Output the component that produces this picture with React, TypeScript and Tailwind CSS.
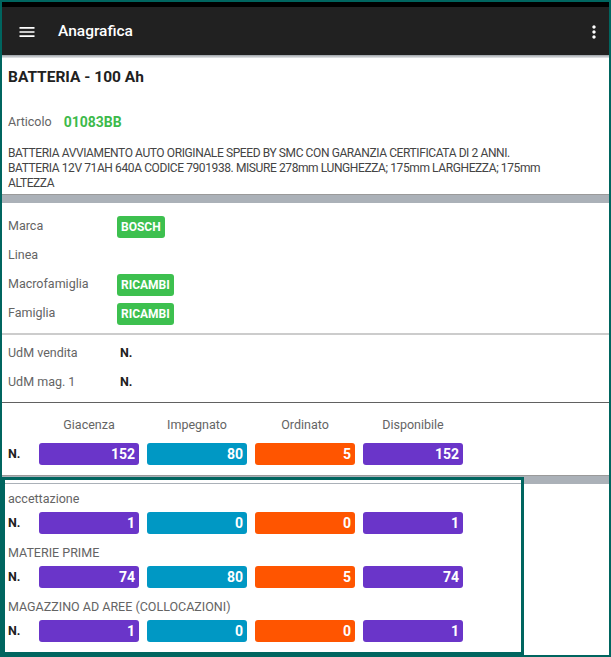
import React from 'react';

type Qty = { giacenza: number; impegnato: number; ordinato: number; disponibile: number };

const totals: Qty = { giacenza: 152, impegnato: 80, ordinato: 5, disponibile: 152 };

const magazzini: { nome: string; qty: Qty }[] = [
  { nome: 'accettazione', qty: { giacenza: 1, impegnato: 0, ordinato: 0, disponibile: 1 } },
  { nome: 'MATERIE PRIME', qty: { giacenza: 74, impegnato: 80, ordinato: 5, disponibile: 74 } },
  { nome: 'MAGAZZINO AD AREE (COLLOCAZIONI)', qty: { giacenza: 1, impegnato: 0, ordinato: 0, disponibile: 1 } },
];

const Chip: React.FC<{ text: string }> = ({ text }) => (
  <span className="inline-flex h-[22px] items-center rounded-[3px] bg-[#3dc04f] px-[4px] text-[12px] font-bold text-white">
    {text}
  </span>
);

const InfoRow: React.FC<{ label: string; labelWidth?: string; children?: React.ReactNode }> = ({ label, labelWidth = 'w-[109px]', children }) => (
  <div className="flex h-[29px] items-center">
    <span className={`${labelWidth} text-[12.5px] text-[#646464]`}>{label}</span>
    {children}
  </div>
);

const QtyBars: React.FC<{ qty: Qty }> = ({ qty }) => (
  <div className="flex h-[22px] items-center">
    <span className="w-[31px] text-[12.5px] font-bold text-[#212121]">N.</span>
    <div className="flex gap-[8px]">
      <div className="flex h-[22px] w-[100px] items-center justify-end rounded-[3px] bg-[#6a35c9] pr-[4px] text-[14px] font-bold text-white">{qty.giacenza}</div>
      <div className="flex h-[22px] w-[100px] items-center justify-end rounded-[3px] bg-[#0098c4] pr-[4px] text-[14px] font-bold text-white">{qty.impegnato}</div>
      <div className="flex h-[22px] w-[100px] items-center justify-end rounded-[3px] bg-[#ff5500] pr-[4px] text-[14px] font-bold text-white">{qty.ordinato}</div>
      <div className="flex h-[22px] w-[100px] items-center justify-end rounded-[3px] bg-[#6a35c9] pr-[4px] text-[14px] font-bold text-white">{qty.disponibile}</div>
    </div>
  </div>
);

const Band: React.FC = () => (
  <div className="h-[9px] border-t border-[#9a9a9a] bg-[#abb1b8]" />
);

const App: React.FC = () => {
  return (
    <div className="flex h-[657px] w-[611px] flex-col overflow-hidden border-2 border-[#00655f] bg-white font-['Roboto',sans-serif]">
      {/* status bar + toolbar */}
      <div className="h-[5px] bg-black" />
      <div className="flex h-[48px] items-center bg-[#212121] pl-[15px] pr-[5px] text-white">
        <svg viewBox="0 0 24 24" className="mt-[1px] h-5 w-5" fill="currentColor">
          <path d="M3 18h18v-2H3v2zm0-5h18v-2H3v2zm0-7v2h18V6H3z" />
        </svg>
        <span className="ml-[21px] pt-[1px] text-[15.5px] font-medium">Anagrafica</span>
        <svg viewBox="0 0 24 24" className="ml-auto mt-[1px] h-5 w-5" fill="currentColor">
          <path d="M12 8c1.1 0 2-.9 2-2s-.9-2-2-2-2 .9-2 2 .9 2 2 2zm0 2c-1.1 0-2 .9-2 2s.9 2 2 2 2-.9 2-2-.9-2-2-2zm0 6c-1.1 0-2 .9-2 2s.9 2 2 2 2-.9 2-2-.9-2-2-2z" />
        </svg>
      </div>
      <div className="h-[3px] bg-gradient-to-b from-[#9aa0a6] to-[#e8eaec]" />

      {/* articolo */}
      <div className="px-[6px] pt-[9px] pb-[3px]">
        <div className="text-[15.5px] font-bold leading-[20px] text-[#212121]">BATTERIA - 100 Ah</div>
        <div className="mt-[25px] flex h-[20px] items-center">
          <span className="text-[12.5px] text-[#646464]">Articolo</span>
          <span className="ml-[12px] text-[14px] font-bold text-[#3dba4b]">01083BB</span>
        </div>
        <p className="mt-[14px] max-w-[548px] text-[12px] leading-[15px] tracking-[-0.4px] text-[#444]">
          BATTERIA AVVIAMENTO AUTO ORIGINALE SPEED BY SMC CON GARANZIA CERTIFICATA DI 2 ANNI. BATTERIA 12V 71AH 640A CODICE 7901938. MISURE 278mm LUNGHEZZA; 175mm LARGHEZZA; 175mm ALTEZZA
        </p>
      </div>
      <Band />

      {/* classificazione */}
      <div className="border-b-2 border-[#cccccc] px-[6px] pt-[9px] pb-[5px]">
        <InfoRow label="Marca"><Chip text="BOSCH" /></InfoRow>
        <InfoRow label="Linea" />
        <InfoRow label="Macrofamiglia"><Chip text="RICAMBI" /></InfoRow>
        <InfoRow label="Famiglia"><Chip text="RICAMBI" /></InfoRow>
      </div>

      {/* unità di misura */}
      <div className="border-b border-[#616161] px-[6px] pt-[4px] pb-[5px]">
        <InfoRow label="UdM vendita" labelWidth="w-[112px]"><span className="text-[12.5px] font-bold text-[#212121]">N.</span></InfoRow>
        <InfoRow label="UdM mag. 1" labelWidth="w-[112px]"><span className="text-[12.5px] font-bold text-[#212121]">N.</span></InfoRow>
      </div>

      {/* totali */}
      <div className="px-[6px] pt-[13px] pb-[10px]">
        <div className="ml-[31px] flex gap-[8px] text-[12.5px] leading-[18px] text-[#646464]">
          <span className="w-[100px] text-center">Giacenza</span>
          <span className="w-[100px] text-center">Impegnato</span>
          <span className="w-[100px] text-center">Ordinato</span>
          <span className="w-[100px] text-center">Disponibile</span>
        </div>
        <div className="mt-[9px]">
          <QtyBars qty={totals} />
        </div>
      </div>
      <Band />

      {/* dettaglio per magazzino */}
      <div className="relative flex-1 px-[6px] pt-[6px]">
        {magazzini.map((m, i) => (
          <div key={m.nome} className={i > 0 ? 'mt-[10px]' : ''}>
            <div className="text-[12.5px] leading-[18px] text-[#646464]">{m.nome}</div>
            <div className="mt-[4px]">
              <QtyBars qty={m.qty} />
            </div>
          </div>
        ))}
        <div className="absolute -top-[7px] bottom-0 left-0 w-[522px] border-[3px] border-[#00655f]">
          <div className="h-[3px] bg-white" />
        </div>
      </div>
    </div>
  );
};

export default App;
